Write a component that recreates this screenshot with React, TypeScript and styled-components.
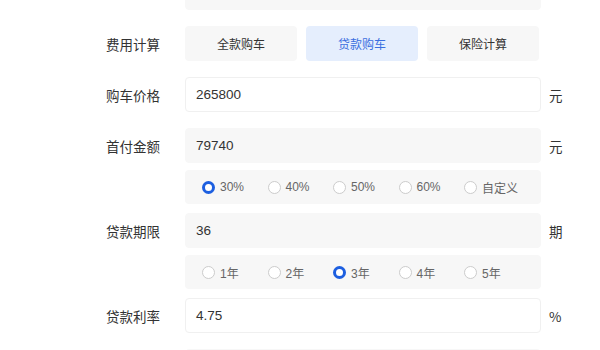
import React, { useState } from "react";
import styled, { createGlobalStyle } from "styled-components";

const GlobalStyle = createGlobalStyle`
  html, body {
    margin: 0;
    padding: 0;
    background: #ffffff;
    overflow: hidden;
  }
  body {
    font-family: "Liberation Sans", "Noto Sans CJK SC", sans-serif;
    color: #333333;
  }
`;

const cjk = `"Noto Sans CJK SC", "Liberation Sans", sans-serif`;

const Page = styled.div`
  width: 600px;
  height: 350px;
  overflow: hidden;
`;

const Form = styled.div`
  display: flex;
  flex-direction: column;
  margin-top: -25px;
`;

const Item = styled.div`
  display: flex;
  flex-direction: column;
  margin-bottom: 16px;
`;

const Row = styled.div`
  display: flex;
  align-items: center;
`;

const Label = styled.div`
  width: 185px;
  box-sizing: border-box;
  padding-right: 25px;
  text-align: right;
  font-family: ${cjk};
  font-size: 13.5px;
  line-height: 20px;
  color: #333333;
`;

const Field = styled.div<{ $white?: boolean }>`
  width: 356px;
  height: 35px;
  box-sizing: border-box;
  display: flex;
  align-items: center;
  padding: 0 10px;
  border-radius: 4px;
  font-size: 13.5px;
  color: #333333;
  background: ${(p) => (p.$white ? "#ffffff" : "#f7f7f7")};
  border: 1px solid ${(p) => (p.$white ? "#f0f0f0" : "#f7f7f7")};
`;

const Unit = styled.span`
  margin-left: 8px;
  font-family: ${cjk};
  font-size: 13.5px;
  line-height: 20px;
  color: #333333;
`;

const Tabs = styled.div`
  width: 356px;
  display: flex;
  gap: 9px;
`;

const Tab = styled.button<{ $active?: boolean }>`
  width: 112px;
  height: 35px;
  border: none;
  border-radius: 4px;
  padding: 0;
  font-family: ${cjk};
  font-size: 12px;
  cursor: pointer;
  background: ${(p) => (p.$active ? "#e5eefd" : "#f7f7f7")};
  color: ${(p) => (p.$active ? "#3b6fe0" : "#333333")};
`;

const RadioGroup = styled.div`
  margin: 7px 0 -7px 185px;
  width: 356px;
  height: 34px;
  box-sizing: border-box;
  padding-left: 17px;
  display: flex;
  align-items: center;
  background: #f7f7f7;
  border-radius: 4px;
`;

const RadioItem = styled.label`
  width: 65.5px;
  display: flex;
  align-items: center;
  gap: 5px;
  font-size: 12px;
  color: #666666;
  cursor: pointer;
`;

const Dot = styled.span<{ $checked?: boolean }>`
  width: 13px;
  height: 13px;
  box-sizing: border-box;
  border-radius: 50%;
  background: #ffffff;
  border: ${(p) => (p.$checked ? "3px solid #1d5fe0" : "1px solid #cccccc")};
  flex-shrink: 0;
`;

const Radios: React.FC<{
  options: string[];
  value: string;
  onChange: (v: string) => void;
}> = ({ options, value, onChange }) => (
  <RadioGroup>
    {options.map((o) => (
      <RadioItem key={o} onClick={() => onChange(o)}>
        <Dot $checked={o === value} />
        {o}
      </RadioItem>
    ))}
  </RadioGroup>
);

export default function App() {
  const [mode, setMode] = useState("贷款购车");
  const [ratio, setRatio] = useState("30%");
  const [term, setTerm] = useState("3年");

  return (
    <Page>
      <GlobalStyle />
      <Form>
        <Item>
          <Row>
            <Label />
            <Field />
          </Row>
        </Item>

        <Item>
          <Row>
            <Label>费用计算</Label>
            <Tabs>
              {["全款购车", "贷款购车", "保险计算"].map((t) => (
                <Tab key={t} $active={t === mode} onClick={() => setMode(t)}>
                  {t}
                </Tab>
              ))}
            </Tabs>
          </Row>
        </Item>

        <Item>
          <Row>
            <Label>购车价格</Label>
            <Field $white>265800</Field>
            <Unit>元</Unit>
          </Row>
        </Item>

        <Item>
          <Row>
            <Label>首付金额</Label>
            <Field>79740</Field>
            <Unit>元</Unit>
          </Row>
          <Radios
            options={["30%", "40%", "50%", "60%", "自定义"]}
            value={ratio}
            onChange={setRatio}
          />
        </Item>

        <Item>
          <Row>
            <Label>贷款期限</Label>
            <Field>36</Field>
            <Unit>期</Unit>
          </Row>
          <Radios
            options={["1年", "2年", "3年", "4年", "5年"]}
            value={term}
            onChange={setTerm}
          />
        </Item>

        <Item>
          <Row>
            <Label>贷款利率</Label>
            <Field $white>4.75</Field>
            <Unit>%</Unit>
          </Row>
        </Item>

        <Item>
          <Row>
            <Label />
            <Field />
          </Row>
        </Item>
      </Form>
    </Page>
  );
}
